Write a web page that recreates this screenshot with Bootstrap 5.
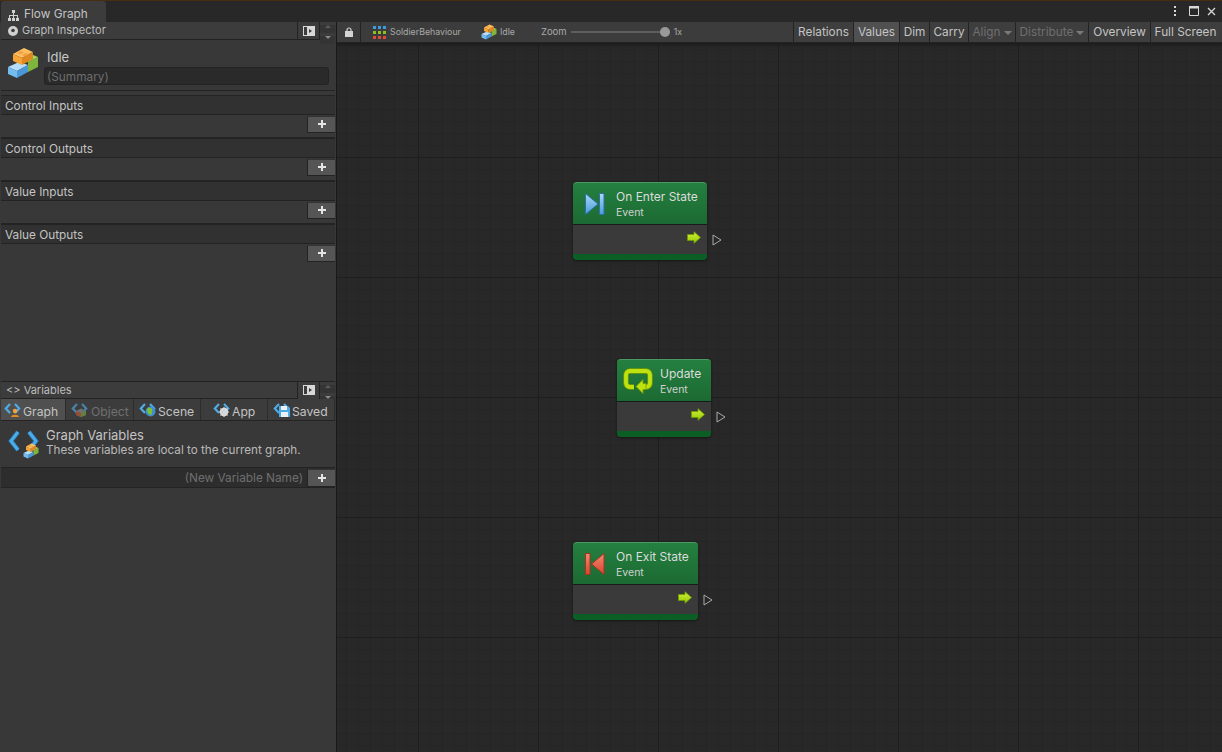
<!DOCTYPE html>
<html lang="en">
<head>
  <meta charset="UTF-8">
  <title>Flow Graph</title>
  <link href="https://cdn.jsdelivr.net/npm/bootstrap@5.3.0/dist/css/bootstrap.min.css" rel="stylesheet">
  <style>
    html, body { height: 100%; margin: 0; overflow: hidden; }
    body { background: #191919; color: #c4c4c4; font-family: Inter, "Liberation Sans", sans-serif; font-size: 11.8px; line-height: 1; }
    svg { display: block; flex: none; }

    .app-frame { width: 1222px; height: 752px; border-top: 1px solid #4a2c10; }
    .tab-strip { height: 21px; background: #282828; }
    .tab-active { width: 105px; height: 21px; margin-left: 1px; background: #3c3c3c; gap: 5px; padding: 7px 0 0 7px; color: #c4c4c4; border-radius: 3px 3px 0 0; }
    .win-controls { gap: 8px; padding-right: 6px; padding-bottom: 1px; }

    .main-row { height: 730px; background: #191919; }
    .side-panel { width: 337px; padding-left: 1px; padding-right: 1px; background: #383838; border-right: 1px solid #191919; }
    .panel-head { height: 18px; background: #3c3c3c; border-bottom: 1px solid #232323; padding-left: 7px; gap: 4px; font-size: 11px; color: #bdbdbd; }
    .panel-head.vars { padding-left: 5px; border-top: 1px solid #232323; }
    .head-toggle { width: 22px; height: 17px; background: #3c3c3c; border-left: 1px solid #232323; }
    .head-stepper { width: 16px; height: 17px; border-left: 1px solid #232323; margin-left: -4px; }
    .head-stepper span { display: block; height: 8px; margin-bottom: 1px; background: #343434; }
    .tri-up { width: 0; height: 0; border-left: 3px solid transparent; border-right: 3px solid transparent; border-bottom: 3px solid #5c5c5c; margin: 3px auto 0; }
    .tri-down { width: 0; height: 0; border-left: 3px solid transparent; border-right: 3px solid transparent; border-top: 3px solid #8a8a8a; margin: 3px auto 0; }

    .title-block { height: 51px; padding: 7px 6px 0 6px; gap: 5px; border-bottom: 1px solid #232323; }
    .title-name { font-size: 13px; color: #c8c8c8; padding: 4px 0 0 3px; height: 20px; }
    .summary-box { height: 18px; padding: 4px 0 0 2px; background: #2a2a2a; border: 1px solid #232323; border-radius: 3px; color: #6e6e6e; width: 285px; }

    .sect-head { height: 20px; margin-top: 4px; padding: 3px 0 0 4px; background: #313131; border-top: 1px solid #232323; border-bottom: 1px solid #232323; color: #c4c4c4; }
    .sect-head.tight { margin-top: 0; }
    .sect-body { height: 23px; background: #383838; border-bottom: 1px solid #232323; }
    .sect-body.grow { height: 137px; border-bottom: 0; }
    .add-btn { width: 28px; height: 17px; margin-top: 1px; background: #555; border: 0; border-left: 1px solid #232323; border-bottom: 1px solid #232323; border-top: 1px solid #333; padding: 0 0 2px; }

    .var-tabs { height: 22px; background: #3c3c3c; border-bottom: 1px solid #232323; }
    .var-tab { height: 21px; gap: 1px; padding: 1px 0 0 3px; background: #3c3c3c; border-right: 1px solid #2c2c2c; color: #c4c4c4; font-size: 12.2px; }
    .var-tab span { padding-top: 5px; }
    .var-tab.on { background: #505050; }
    .var-tab.off { color: #707070; }
    .tab-w1 { width: 65px; } .tab-w2 { width: 68px; } .tab-w3 { width: 67px; } .tab-w4 { width: 67px; } .tab-w5 { flex: 1; }
    .tab-w2 { padding-left: 5px; gap: 2px; } .tab-w3 { padding-left: 5px; }
    .tab-w4 { padding-left: 12px; } .tab-w5 { padding-left: 5px; }

    .var-info { height: 47px; padding: 8px 0 0 7px; gap: 7px; border-bottom: 1px solid #232323; }
    .var-title { font-size: 13px; color: #c4c4c4; margin-bottom: 3px; }
    .var-desc { font-size: 11.7px; color: #b8b8b8; }
    .var-icon { width: 31px; height: 30px; }
    .var-new { height: 20px; background: #2d2d2d; color: #6f6f6f; border-bottom: 1px solid #232323; }
    .var-new-text { padding: 2px 4px 0 0; }
    .var-new .add-btn { height: 18px; padding-bottom: 0; }

    .canvas-wrap { width: 885px; }
    .graph-bar { height: 21px; background: #3c3c3c; border-bottom: 1px solid #232323; font-size: 8.8px; color: #a9a9a9; }
    .bar-lock { width: 24px; height: 20px; border-right: 1px solid #232323; }
    .crumb { gap: 3px; }
    .crumb-first { margin-left: 12px; }
    .crumb-second { margin-left: 20px; }
    .zoom-word { margin-left: 26px; font-size: 9.5px; }
    .zoom-track { width: 99px; height: 2px; background: #5e5e5e; position: relative; margin: 0 4px 0 4px; }
    .zoom-knob { width: 10px; height: 10px; background: #999; border-radius: 50%; position: absolute; right: 0; top: -4px; }
    .bar-btns { margin-right: 2px; }
    .bar-btn { height: 20px; padding-top: 2px; background: #3e3e3e; border-left: 1px solid #232323; color: #c4c4c4; font-size: 11.8px; }
    .bar-btn.on { background: #505050; }
    .bar-btn.off { color: #6f6f6f; }
    .btn-w1 { width: 60px; } .btn-w2 { width: 46px; } .btn-w3 { width: 30px; } .btn-w4 { width: 39px; }
    .btn-w5 { width: 47px; } .btn-w6 { width: 73px; } .btn-w7 { width: 62px; } .btn-w8 { width: 70px; }
    .drop-tri { width: 0; height: 0; border-left: 4px solid transparent; border-right: 4px solid transparent; border-top: 4px solid #7a7a7a; margin-left: 3px; }

    .graph-canvas { height: 709px; position: relative; overflow: hidden; background-color: #282828;
      background-image:
        linear-gradient(#1e1e1e 1px, transparent 1px),
        linear-gradient(90deg, #1e1e1e 1px, transparent 1px),
        linear-gradient(#252525 1px, transparent 1px),
        linear-gradient(90deg, #252525 1px, transparent 1px);
      background-size: 120px 120px, 120px 120px, 12px 12px, 12px 12px;
      background-position: 0 -6px, 81px 0, 0 6px, 9px 0; }
    .graph-canvas::before { content: ""; position: absolute; inset: 0 0 auto 0; height: 5px; background: linear-gradient(#1c1c1c, transparent); }

    .flow-node { position: absolute; border-radius: 4px; box-shadow: 0 1px 3px rgba(0,0,0,.45); }
    .node-top { height: 43px; background: linear-gradient(#24803f, #1c6a33); border-top: 1px solid #4c9a63; border-radius: 4px 4px 0 0; border-bottom: 1px solid #1a1a1a; padding-left: 10px; gap: 9px; }
    .node-top.wide-icon { padding-left: 6px; gap: 7px; }
    .node-text { padding-top: 3px; }
    .node-title { font-size: 12px; color: #dcdcdc; margin-bottom: 5px; }
    .node-sub { font-size: 10.5px; color: #d0d0d0; }
    .node-mid { height: 29px; background: #3a3a3a; padding: 0 6px 4px 0; }
    .node-foot { height: 6px; background: #0b5f25; border-radius: 0 0 4px 4px; }
    .node-port { position: absolute; right: -15px; top: 52px; }
    .node-a { left: 236px; top: 139px; width: 134px; }
    .node-b { left: 280px; top: 316px; width: 94px; }
    .node-c { left: 236px; top: 499px; width: 125px; }
  </style>
</head>
<body>
  <svg width="0" height="0" class="position-absolute">
    <defs>
      <linearGradient id="blueGrad" x1="0" y1="0" x2="0" y2="1"><stop offset="0" stop-color="#a9d8f7"/><stop offset="1" stop-color="#4a9bdc"/></linearGradient>
      <linearGradient id="redGrad" x1="0" y1="0" x2="0" y2="1"><stop offset="0" stop-color="#f28a72"/><stop offset="1" stop-color="#d8452f"/></linearGradient>
      <linearGradient id="arrowGrad" x1="0" y1="0" x2="0" y2="1"><stop offset="0" stop-color="#d4f03a"/><stop offset="1" stop-color="#93c900"/></linearGradient>
      <symbol id="plus" viewBox="0 0 10 10"><path d="M4 1h2v3h3v2H6v3H4V6H1V4h3z" fill="#e4e4e4"/></symbol>
      <symbol id="toggle" viewBox="0 0 12 10"><path d="M0 0h12v10H0z" fill="#d8d8d8"/><path d="M1 1h3v8H1z" fill="#3c3c3c"/><path d="M6 3l3 2-3 2z" fill="#3c3c3c"/></symbol>
      <symbol id="bricks" viewBox="0 0 32 32">
        <path d="M21 15l10-5v10l-10 5z" fill="#7fb53c"/>
        <path d="M21 15l10-5-5-2-10 5z" fill="#a8d65c"/>
        <path d="M1 20l11-5 9 3-11 6z" fill="#b4defa"/>
        <path d="M1 20l9 4v7l-9-4z" fill="#74bcf0"/>
        <path d="M10 24l11-6v7l-11 6z" fill="#4a98d8"/>
        <path d="M6 7l11-6 9 4-11 6z" fill="#ffbf5e"/>
        <path d="M6 7l9 4v7l-9-4z" fill="#f6a436"/>
        <path d="M15 11l11-6v7l-11 6z" fill="#dd8820"/>
        <path d="M10 6l4-2 3 1.500-4 2zM15 8l4-2 3 1.500-4 2z" fill="#f0a040"/>
      </symbol>
      <symbol id="bigcode" viewBox="0 0 31 30">
        <path d="M10 3L3 12l7 9" fill="none" stroke="#1f6ea6" stroke-width="4.600"/>
        <path d="M10 3L3 12l7 9" fill="none" stroke="#4fabe6" stroke-width="3"/>
        <path d="M21 3l7 9-7 9" fill="none" stroke="#1f6ea6" stroke-width="4.600"/>
        <path d="M21 3l7 9-7 9" fill="none" stroke="#4fabe6" stroke-width="3"/>
      </symbol>
      <symbol id="tabcode" viewBox="0 0 18 14">
        <path d="M6 1L1.800 5.500 6 10" fill="none" stroke="#4fabe6" stroke-width="2.200"/>
        <path d="M11 1l4.200 4.500L11 10" fill="none" stroke="#4fabe6" stroke-width="2.200"/>
      </symbol>
      <symbol id="flowarrow" viewBox="0 0 14 13"><path d="M.5 3.500h6.500V.7l6.500 5.800L7 12.300V9.500H.5z" fill="url(#arrowGrad)" stroke="#6f9c00" stroke-width=".8"/></symbol>
      <symbol id="porttri" viewBox="0 0 10 12"><path d="M1 1l8 5-8 5z" fill="none" stroke="#a8a8a8"/></symbol>
    </defs>
  </svg>

  <div class="app-frame d-flex flex-column">
    <div class="tab-strip d-flex justify-content-between">
      <div class="tab-active d-flex align-items-center">
        <svg width="11" height="11" viewBox="0 0 11 11"><path d="M4 0h3v3H6v2h4v3h1v3H8V8h1V6H6v2h1v3H4V8h1V6H2v2h1v3H0V8h1V5h4V3H4z" fill="#d0d0d0"/></svg>
        <span>Flow Graph</span>
      </div>
      <div class="win-controls d-flex align-items-center">
        <svg class="me-1" width="4" height="10" viewBox="0 0 4 10"><path d="M1 0h2v2H1zM1 4h2v2H1zM1 8h2v2H1z" fill="#d8d8d8"/></svg>
        <svg width="10" height="10" viewBox="0 0 10 10"><path d="M.5.5h9v9h-9z" fill="none" stroke="#d8d8d8"/><path d="M0 0h10v2.500H0z" fill="#d8d8d8"/></svg>
        <svg width="9" height="9" viewBox="0 0 9 9"><path d="M1 1l7 7M8 1L1 8" stroke="#d8d8d8" stroke-width="1.300"/></svg>
      </div>
    </div>

    <div class="main-row d-flex">
      <aside class="side-panel d-flex flex-column">
        <div class="panel-head d-flex align-items-center">
          <svg width="10" height="10" viewBox="0 0 10 10"><circle cx="5" cy="5" r="5" fill="#d0d0d0"/><circle cx="5" cy="4.500" r="1.800" fill="#3c3c3c"/></svg>
          <span class="flex-grow-1">Graph Inspector</span>
          <div class="head-toggle d-flex align-items-center justify-content-center"><svg width="12" height="10"><use href="#toggle"/></svg></div>
          <div class="head-stepper"><span><i class="tri-up d-block"></i></span><span><i class="tri-down d-block"></i></span></div>
        </div>

        <div class="title-block d-flex">
          <svg width="32" height="32"><use href="#bricks"/></svg>
          <div>
            <div class="title-name">Idle</div>
            <div class="summary-box d-flex align-items-center">(Summary)</div>
          </div>
        </div>

        <div class="sect-head d-flex align-items-center">Control Inputs</div>
        <div class="sect-body d-flex justify-content-end"><button class="add-btn d-flex align-items-center justify-content-center"><svg width="10" height="10"><use href="#plus"/></svg></button></div>
        <div class="sect-head tight d-flex align-items-center">Control Outputs</div>
        <div class="sect-body d-flex justify-content-end"><button class="add-btn d-flex align-items-center justify-content-center"><svg width="10" height="10"><use href="#plus"/></svg></button></div>
        <div class="sect-head tight d-flex align-items-center">Value Inputs</div>
        <div class="sect-body d-flex justify-content-end"><button class="add-btn d-flex align-items-center justify-content-center"><svg width="10" height="10"><use href="#plus"/></svg></button></div>
        <div class="sect-head tight d-flex align-items-center">Value Outputs</div>
        <div class="sect-body grow d-flex justify-content-end align-items-start"><button class="add-btn d-flex align-items-center justify-content-center"><svg width="10" height="10"><use href="#plus"/></svg></button></div>

        <div class="panel-head vars d-flex align-items-center">
          <span class="flex-grow-1">&lt;&gt; Variables</span>
          <div class="head-toggle d-flex align-items-center justify-content-center"><svg width="12" height="10"><use href="#toggle"/></svg></div>
          <div class="head-stepper"><span><i class="tri-up d-block"></i></span><span><i class="tri-down d-block"></i></span></div>
        </div>

        <div class="var-tabs d-flex">
          <div class="var-tab on tab-w1 d-flex align-items-center">
            <svg width="18" height="14" viewBox="0 0 18 14"><use href="#tabcode" width="18" height="14"/><circle cx="11" cy="8" r="2.200" fill="#f2a23a"/><path d="M7 14c0-3 8-3 8 0z" fill="#e08a22"/></svg>
            <span>Graph</span>
          </div>
          <div class="var-tab off tab-w2 d-flex align-items-center">
            <svg width="18" height="14" viewBox="0 0 18 14"><g opacity=".65"><use href="#tabcode" width="18" height="14"/><path d="M5 8l5-2.500L15 8v4l-5 2-5-2z" fill="#8c8c8c"/><path d="M5 8l5 2v4l-5-2z" fill="#c4573f"/><path d="M10 10l5-2v4l-5 2z" fill="#7aa63a"/></g></svg>
            <span>Object</span>
          </div>
          <div class="var-tab tab-w3 d-flex align-items-center">
            <svg width="18" height="14" viewBox="0 0 18 14"><use href="#tabcode" width="18" height="14"/><circle cx="11.500" cy="8.500" r="5" fill="#3f8fd0"/><path d="M8 6c2-2 4-1 5 0 1 2-1 3 0 5-2 2-5-1-5-5z" fill="#7cc22e"/></svg>
            <span>Scene</span>
          </div>
          <div class="var-tab tab-w4 d-flex align-items-center">
            <svg width="18" height="14" viewBox="0 0 18 14"><use href="#tabcode" width="18" height="14"/><circle cx="11" cy="9" r="3.200" fill="none" stroke="#dcdcdc" stroke-width="2"/><path d="M11 4v10M6 9h10M7.500 5.500l7 7M14.500 5.500l-7 7" stroke="#dcdcdc" stroke-width="1.200"/></svg>
            <span>App</span>
          </div>
          <div class="var-tab tab-w5 d-flex align-items-center">
            <svg width="18" height="14" viewBox="0 0 18 14"><use href="#tabcode" width="18" height="14"/><path d="M6 3h9l2 2v9H6z" fill="#4fabe6"/><path d="M8 3h6v4H8zM8 9h7v5H8z" fill="#e8f2f8"/></svg>
            <span>Saved</span>
          </div>
        </div>

        <div class="var-info d-flex">
          <div class="var-icon position-relative">
            <svg width="31" height="30"><use href="#bigcode"/></svg>
            <svg class="position-absolute bottom-0 end-0" width="16" height="16"><use href="#bricks"/></svg>
          </div>
          <div>
            <div class="var-title">Graph Variables</div>
            <div class="var-desc">These variables are local to the current graph.</div>
          </div>
        </div>
        <div class="var-new d-flex align-items-center justify-content-end">
          <span class="var-new-text">(New Variable Name)</span>
          <button class="add-btn d-flex align-items-center justify-content-center"><svg width="10" height="10"><use href="#plus"/></svg></button>
        </div>
      </aside>

      <main class="canvas-wrap d-flex flex-column">
        <div class="graph-bar d-flex align-items-center">
          <div class="bar-lock d-flex align-items-center justify-content-center">
            <svg width="8" height="10" viewBox="0 0 8 10"><path d="M2 4V3a2 2 0 0 1 4 0v1" fill="none" stroke="#d4d4d4" stroke-width="1.200"/><path d="M0 4h8v6H0z" fill="#d4d4d4"/></svg>
          </div>
          <div class="crumb crumb-first d-flex align-items-center">
            <svg width="14" height="14" viewBox="0 0 14 14">
              <path d="M0 1h3v3H0zM5 1h3v3H5zM10 1h3v3h-3z" fill="#3a9be0"/>
              <path d="M0 6h3v3H0zM5 6h3v3H5zM10 6h3v3h-3z" fill="#8cc21e"/>
              <path d="M0 11h3v3H0zM5 11h3v3H5zM10 11h3v3h-3z" fill="#e04a3a"/>
            </svg>
            <span>SoldierBehaviour</span>
          </div>
          <div class="crumb crumb-second d-flex align-items-center">
            <svg width="16" height="16"><use href="#bricks"/></svg>
            <span>Idle</span>
          </div>
          <span class="zoom-word">Zoom</span>
          <div class="zoom-track"><div class="zoom-knob"></div></div>
          <span>1x</span>
          <div class="bar-btns ms-auto d-flex">
            <div class="bar-btn btn-w1 d-flex align-items-center justify-content-center">Relations</div>
            <div class="bar-btn on btn-w2 d-flex align-items-center justify-content-center">Values</div>
            <div class="bar-btn btn-w3 d-flex align-items-center justify-content-center">Dim</div>
            <div class="bar-btn btn-w4 d-flex align-items-center justify-content-center">Carry</div>
            <div class="bar-btn off btn-w5 d-flex align-items-center justify-content-center">Align<i class="drop-tri"></i></div>
            <div class="bar-btn off btn-w6 d-flex align-items-center justify-content-center">Distribute<i class="drop-tri"></i></div>
            <div class="bar-btn btn-w7 d-flex align-items-center justify-content-center">Overview</div>
            <div class="bar-btn btn-w8 d-flex align-items-center justify-content-center">Full Screen</div>
          </div>
        </div>

        <div class="graph-canvas">
          <div class="flow-node node-a">
            <div class="node-top d-flex align-items-center">
              <svg width="24" height="24" viewBox="0 0 24 24"><path d="M2.500 1.500l12.500 10.500-12.500 10.500z" fill="url(#blueGrad)" stroke="#2d6fa6"/><path d="M16.500 1.500h4.500v21h-4.500z" fill="url(#blueGrad)" stroke="#2d6fa6"/></svg>
              <div class="node-text"><div class="node-title">On Enter State</div><div class="node-sub">Event</div></div>
            </div>
            <div class="node-mid d-flex align-items-center justify-content-end"><svg width="14" height="13"><use href="#flowarrow"/></svg></div>
            <div class="node-foot"></div>
            <svg class="node-port" width="10" height="12"><use href="#porttri"/></svg>
          </div>

          <div class="flow-node node-b">
            <div class="node-top wide-icon d-flex align-items-center">
              <svg width="30" height="26" viewBox="0 0 30 26">
                <path d="M11 19H7a4 4 0 0 1-4-4V7a4 4 0 0 1 4-4h16a4 4 0 0 1 4 4v8a4 4 0 0 1-4 4h-4" fill="none" stroke="#7a9a00" stroke-width="5.400"/>
                <path d="M11 19H7a4 4 0 0 1-4-4V7a4 4 0 0 1 4-4h16a4 4 0 0 1 4 4v8a4 4 0 0 1-4 4h-4" fill="none" stroke="#bde210" stroke-width="3.800"/>
                <path d="M13 18.500l7-7v4h3v6h-3v4z" fill="#bde210" stroke="#7a9a00" stroke-width=".8"/>
              </svg>
              <div class="node-text"><div class="node-title">Update</div><div class="node-sub">Event</div></div>
            </div>
            <div class="node-mid d-flex align-items-center justify-content-end"><svg width="14" height="13"><use href="#flowarrow"/></svg></div>
            <div class="node-foot"></div>
            <svg class="node-port" width="10" height="12"><use href="#porttri"/></svg>
          </div>

          <div class="flow-node node-c">
            <div class="node-top d-flex align-items-center">
              <svg width="24" height="24" viewBox="0 0 24 24"><path d="M2.500 1.500h4.500v21H2.500z" fill="url(#redGrad)" stroke="#a83222"/><path d="M21 1.500L8.500 12 21 22.500z" fill="url(#redGrad)" stroke="#a83222"/></svg>
              <div class="node-text"><div class="node-title">On Exit State</div><div class="node-sub">Event</div></div>
            </div>
            <div class="node-mid d-flex align-items-center justify-content-end"><svg width="14" height="13"><use href="#flowarrow"/></svg></div>
            <div class="node-foot"></div>
            <svg class="node-port" width="10" height="12"><use href="#porttri"/></svg>
          </div>
        </div>
      </main>
    </div>
  </div>

  <script src="https://cdn.jsdelivr.net/npm/bootstrap@5.3.0/dist/js/bootstrap.bundle.min.js"></script>
</body>
</html>
